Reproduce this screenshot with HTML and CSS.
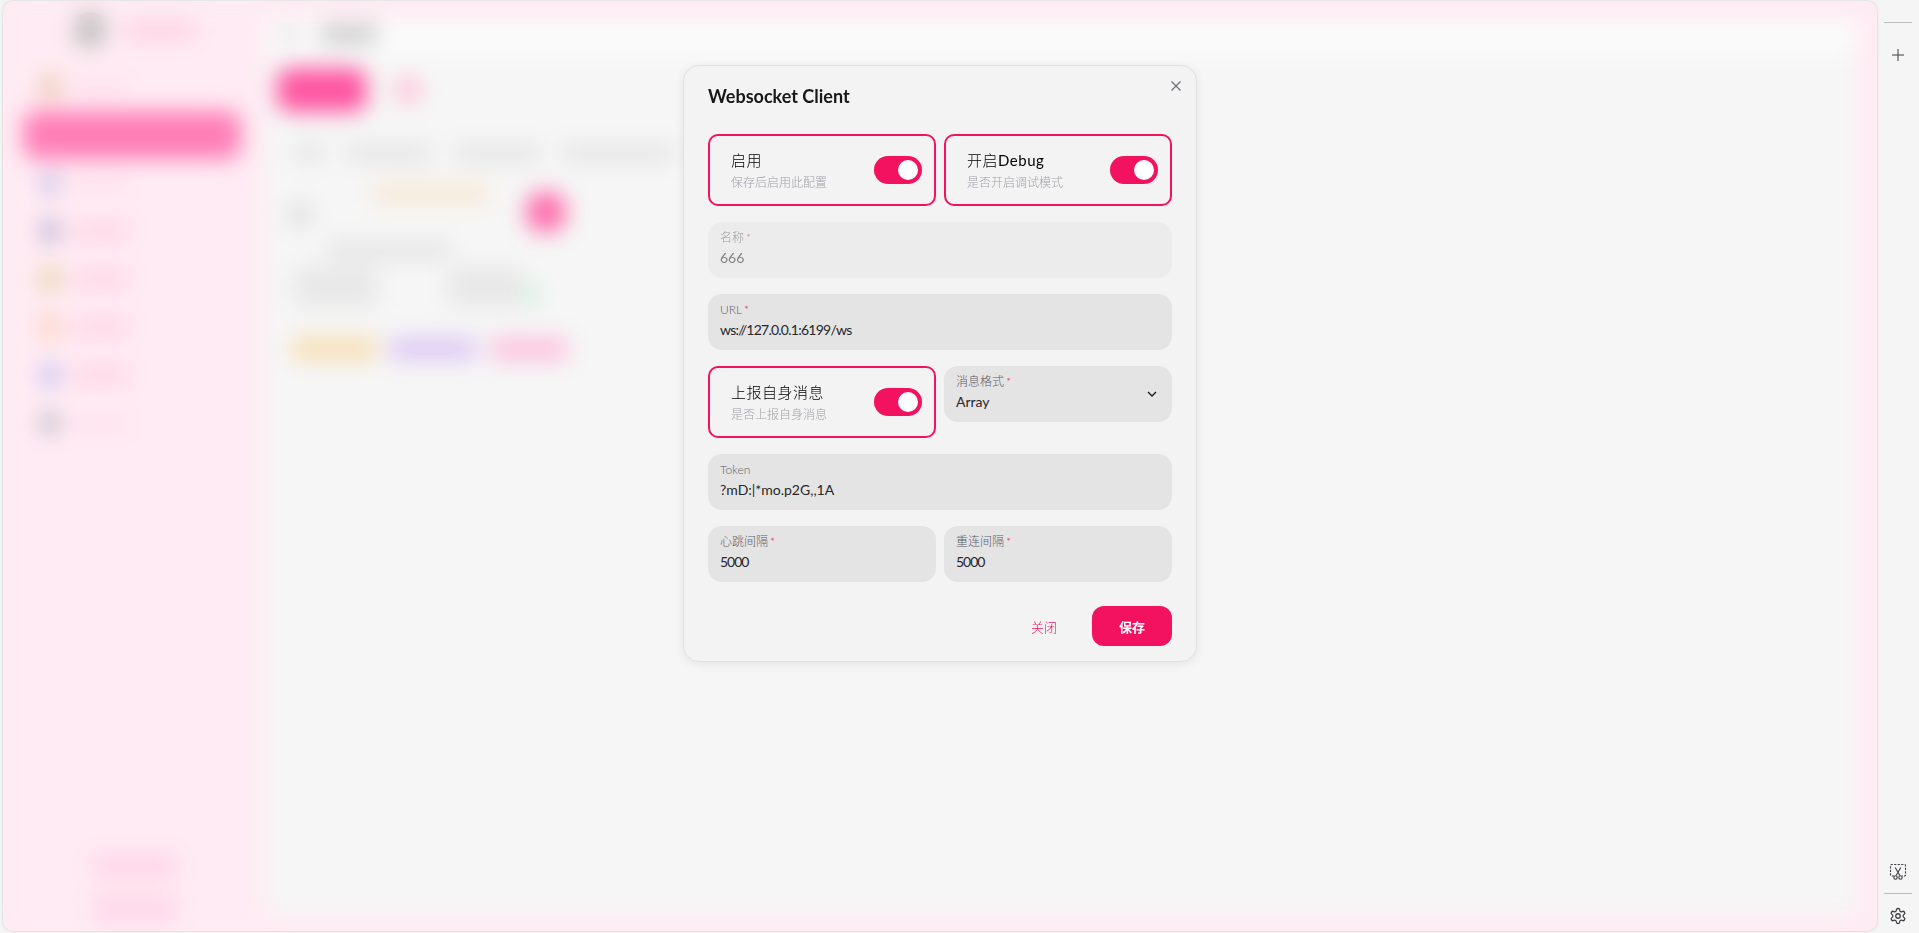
FILE: index.html
```html
<!DOCTYPE html>
<html lang="zh-CN">
<head>
<meta charset="utf-8">
<title>Websocket Client</title>
<link rel="stylesheet" href="styles.css">
</head>
<body>
<div class="shell">
  <div class="panel">
    <aside class="sidebar">
      <div class="logo"><span class="avatar"></span><span class="logo-text"></span></div>
      <nav class="nav">
        <div class="nav-row"><span class="nav-icon i-tan"></span><span class="nav-text faint"></span></div>
        <div class="nav-row active"></div>
        <div class="nav-row"><span class="nav-icon i-blue"></span><span class="nav-text faint"></span></div>
        <div class="nav-row"><span class="nav-icon i-slate"></span><span class="nav-text"></span></div>
        <div class="nav-row"><span class="nav-icon i-olive"></span><span class="nav-text"></span></div>
        <div class="nav-row"><span class="nav-icon i-peach"></span><span class="nav-text"></span></div>
        <div class="nav-row"><span class="nav-icon i-violet"></span><span class="nav-text"></span></div>
        <div class="nav-row"><span class="nav-icon i-gray"></span><span class="nav-text faint"></span></div>
      </nav>
      <div class="side-foot"><span class="foot-btn"></span><span class="foot-btn"></span></div>
    </aside>
    <main class="main">
      <header class="topbar"><span class="back"></span><span class="page-title"></span></header>
      <div class="content">
        <div class="actions"><span class="new-btn"></span><span class="icon-btn"></span></div>
        <div class="tabs"><span class="tab t1"></span><span class="tab t2"></span><span class="tab t2"></span><span class="tab t3"></span></div>
        <section class="card">
          <div class="card-head">
            <span class="card-dot"></span>
            <span class="card-tag"></span>
            <span class="card-switch"></span>
          </div>
          <span class="line-a"></span>
          <div class="card-lines"><span class="line-b"></span><span class="line-c"></span><span class="line-d"></span></div>
          <div class="card-tags"><span class="chip c-y"></span><span class="chip c-p"></span><span class="chip c-r"></span></div>
        </section>
      </div>
    </main>

    <div class="overlay">
      <div class="modal">
        <svg class="close-x" viewBox="0 0 12 12" width="12" height="12"><path d="M1.5 1.5l9 9M10.500 1.500l-9 9"/></svg>
        <h2 class="modal-title">Websocket Client</h2>
        <div class="form">
          <div class="switch-box">
            <div class="switch-text"><div class="switch-label">启用</div><div class="switch-sub">保存后启用此配置</div></div>
            <span class="toggle"><span class="knob"></span></span>
          </div>
          <div class="switch-box">
            <div class="switch-text"><div class="switch-label">开启<span class="latin">Debug</span></div><div class="switch-sub">是否开启调试模式</div></div>
            <span class="toggle"><span class="knob"></span></span>
          </div>
          <div class="field span disabled">
            <div class="field-label">名称<i>*</i></div>
            <div class="field-value">666</div>
          </div>
          <div class="field span">
            <div class="field-label">URL<i>*</i></div>
            <div class="field-value tight">ws://127.0.0.1:6199/ws</div>
          </div>
          <div class="switch-box">
            <div class="switch-text"><div class="switch-label">上报自身消息</div><div class="switch-sub">是否上报自身消息</div></div>
            <span class="toggle"><span class="knob"></span></span>
          </div>
          <div class="field select">
            <div class="field-label">消息格式<i>*</i></div>
            <div class="field-value">Array</div>
            <svg class="chevron" viewBox="0 0 12 12" width="12" height="12"><path d="M2 4l4 4 4-4"/></svg>
          </div>
          <div class="field span">
            <div class="field-label">Token</div>
            <div class="field-value">?mD:|*mo.p2G,,1A</div>
          </div>
          <div class="field">
            <div class="field-label">心跳间隔<i>*</i></div>
            <div class="field-value tighter">5000</div>
          </div>
          <div class="field">
            <div class="field-label">重连间隔<i>*</i></div>
            <div class="field-value tighter">5000</div>
          </div>
        </div>
        <div class="modal-foot">
          <button class="btn btn-ghost" type="button">关闭</button>
          <button class="btn btn-solid" type="button">保存</button>
        </div>
      </div>
    </div>
  </div>

  <aside class="rail">
    <div class="rail-line"></div>
    <svg class="rail-icon plus" viewBox="0 0 14 14" width="14" height="14"><path d="M7 1v12M1 7h12"/></svg>
    <div class="rail-spacer"></div>
    <svg class="rail-icon capture" viewBox="0 0 18 18" width="18" height="18">
      <path class="dash" d="M5 13H2.500a1 1 0 0 1-1-1V2.500a1 1 0 0 1 1-1h13a1 1 0 0 1 1 1V12a1 1 0 0 1-1 1H13"/>
      <path d="M6.200 4.500l4.600 8M11.800 4.500l-4.600 8"/>
      <circle cx="6.500" cy="14.500" r="1.700"/><circle cx="11.500" cy="14.500" r="1.700"/>
    </svg>
    <div class="rail-line second"></div>
    <svg class="rail-icon gear" viewBox="0 0 24 24" width="18" height="18">
      <path d="M12.220 2h-.44a2 2 0 0 0-2 2v.18a2 2 0 0 1-1 1.730l-.43.25a2 2 0 0 1-2 0l-.15-.08a2 2 0 0 0-2.730.73l-.22.38a2 2 0 0 0 .73 2.730l.15.1a2 2 0 0 1 1 1.720v.51a2 2 0 0 1-1 1.740l-.15.09a2 2 0 0 0-.73 2.730l.22.38a2 2 0 0 0 2.730.73l.15-.08a2 2 0 0 1 2 0l.43.25a2 2 0 0 1 1 1.730V20a2 2 0 0 0 2 2h.44a2 2 0 0 0 2-2v-.18a2 2 0 0 1 1-1.730l.43-.25a2 2 0 0 1 2 0l.15.08a2 2 0 0 0 2.730-.73l.22-.39a2 2 0 0 0-.73-2.730l-.15-.08a2 2 0 0 1-1-1.740v-.5a2 2 0 0 1 1-1.740l.15-.09a2 2 0 0 0 .73-2.730l-.22-.38a2 2 0 0 0-2.730-.73l-.15.08a2 2 0 0 1-2 0l-.43-.25a2 2 0 0 1-1-1.730V4a2 2 0 0 0-2-2z"/>
      <circle cx="12" cy="12" r="3"/>
    </svg>
  </aside>
</div>
</body>
</html>
```

FILE: styles.css
```css
* { box-sizing: border-box; }
html, body { height: 100%; margin: 0; }
body {
  background: #f5f5f5;
  color: #18181b;
  font-family: "Lato", "Noto Sans CJK SC", sans-serif;
  overflow: hidden;
}
.shell { display: flex; height: 100vh; padding: 1px 0 2px 3px; }

/* background application, blurred by the overlay */
.panel {
  position: relative;
  flex: 1;
  display: flex;
  min-width: 0;
  background: #ffebf3;
  border-radius: 10px;
  box-shadow: 0 0 3px rgba(0, 0, 0, .18);
  overflow: hidden;
}
.sidebar {
  width: 262px;
  flex: none;
  display: flex;
  flex-direction: column;
  padding: 9px 0 11px 23px;
}
.logo { display: flex; align-items: center; gap: 20px; height: 40px; padding-left: 48px; }
.avatar { width: 32px; height: 36px; border-radius: 16px; background: #c2c2c2; }
.logo-text { width: 68px; height: 16px; background: #ffcde2; }
.nav { margin-top: 13px; display: flex; flex-direction: column; }
.nav-row { height: 48px; display: flex; align-items: center; gap: 14px; padding-left: 15px; }
.nav-icon { width: 18px; height: 22px; border-radius: 8px; }
.nav-text { width: 56px; height: 14px; background: #ffcfe3; }
.nav-text.faint { background: #ffe0ec; }
.i-tan { background: #e6c3a4; }
.i-blue { background: #c8c0e8; }
.i-slate { background: #b4aed2; }
.i-olive { background: #dfd29c; }
.i-peach { background: #fccdb4; }
.i-violet { background: #bfbdf3; }
.i-gray { background: #b9bac8; }
.nav-row.active { width: 218px; margin-left: -3px; border-radius: 14px; background: #ff7db6; }
.side-foot { margin-top: auto; display: flex; flex-direction: column; gap: 18px; padding-left: 67px; }
.foot-btn { width: 84px; height: 24px; background: #ffd6e8; }

.main {
  flex: 1;
  min-width: 0;
  margin: 18px 20px 16px 0;
  background: #f6f6f6;
  border-radius: 12px;
  display: flex;
  flex-direction: column;
}
.topbar {
  height: 36px;
  display: flex;
  align-items: flex-start;
  gap: 22px;
  padding: 5px 0 0 14px;
  background: #fbfbfb;
}
.back { width: 20px; height: 14px; margin-top: 4px; background: #e2e2e2; }
.page-title { width: 56px; height: 20px; background: #cecece; }
.content { padding: 13px 0 0 12px; }
.actions { display: flex; align-items: center; gap: 28px; }
.new-btn { width: 90px; height: 44px; border-radius: 14px; background: #ff55a2; }
.icon-btn { width: 26px; height: 26px; border-radius: 13px; background: #ffbfd7; }
.tabs { display: flex; align-items: center; gap: 24px; margin: 31px 0 0 18px; }
.tab { height: 20px; background: #e6e6e6; }
.t1 { width: 28px; }
.t2 { width: 84px; }
.t3 { width: 110px; }
.card { width: 292px; margin: 13px 0 0 10px; }
.card-head { display: flex; align-items: flex-start; height: 60px; }
.card-dot { width: 26px; height: 26px; border-radius: 13px; background: #e0e0e0; margin-top: 26px; flex: none; }
.card-tag { width: 116px; height: 20px; background: #f7e9d6; margin: 8px 0 0 60px; flex: none; }
.card-switch { width: 42px; height: 42px; border-radius: 21px; background: #ff6fae; margin: 15px 0 0 36px; flex: none; }
.line-a { display: block; width: 124px; height: 20px; margin: 4px 0 0 40px; background: #e6e6e6; }
.card-lines { display: flex; margin: 7px 0 0 7px; height: 40px; }
.line-b { width: 84px; height: 40px; background: #e8e8e8; flex: none; }
.line-c { width: 74px; height: 40px; margin-left: 70px; background: #e8e8e8; flex: none; }
.line-d { width: 20px; height: 28px; margin-top: 13px; background: #dff3e6; flex: none; }
.card-tags { display: flex; gap: 13px; margin: 30px 0 0 5px; }
.chip { height: 24px; flex: none; }
.c-y { width: 85px; background: #f8e0b8; }
.c-p { width: 86px; background: #dfcbf5; }
.c-r { width: 76px; background: #fdc4e0; margin-left: 2px; }

/* overlay + modal */
.overlay {
  position: absolute;
  inset: 0;
  display: flex;
  justify-content: center;
  align-items: flex-start;
  padding-top: 64px;
  backdrop-filter: blur(11px);
}
.modal {
  position: relative;
  width: 514px;
  height: 597px;
  padding: 16px 24px;
  background: #f3f3f3;
  border: 1px solid #e0e0e0;
  border-radius: 16px;
  box-shadow: 0 2px 10px rgba(0, 0, 0, .08);
}
.close-x { position: absolute; top: 14px; right: 14px; fill: none; stroke: #71717a; stroke-width: 1.300; }
.modal-title { margin: 0 0 24px; font-size: 18px; line-height: 28px; font-weight: 700; color: #18181b; }
.form { display: grid; grid-template-columns: 1fr 1fr; gap: 16px 8px; align-items: start; }
.span { grid-column: span 2; }
.switch-box {
  display: flex;
  align-items: center;
  justify-content: space-between;
  height: 72px;
  padding: 0 12px 0 21px;
  border: 2px solid #f31260;
  border-radius: 10px;
}
.switch-label { font-size: 15px; line-height: 22px; font-weight: 300; color: #000; letter-spacing: .5px; }
.latin { font-weight: 400; }
.switch-sub { font-size: 12px; line-height: 16px; margin-top: 4px; color: #a1a1aa; font-weight: 300; }
.toggle { display: flex; justify-content: flex-end; align-items: center; width: 48px; height: 28px; padding: 0 4px; border-radius: 14px; background: #f31260; }
.knob { width: 20px; height: 20px; border-radius: 10px; background: #fff; }
.field {
  position: relative;
  height: 56px;
  padding: 7px 12px;
  background: #e4e4e5;
  border-radius: 14px;
}
.field-label { font-size: 12px; line-height: 18px; color: #5c5c66; font-weight: 300; }
.field-label i { font-style: normal; color: #f31260; margin-left: 2px; }
.field-value { font-size: 14px; line-height: 22px; color: #27272a; }
.tight { letter-spacing: -.75px; }
.tighter { letter-spacing: -1px; }
.disabled { background: #ececec; }
.disabled .field-label, .disabled .field-value { opacity: .55; }
.chevron { position: absolute; top: 22px; right: 14px; fill: none; stroke: #18181b; stroke-width: 1.300; }
.modal-foot { display: flex; justify-content: flex-end; gap: 8px; margin-top: 24px; }
.btn { width: 80px; height: 40px; border: 0; border-radius: 12px; font-family: inherit; font-size: 13px; background: none; padding: 0; }
.btn-ghost { color: #f31260; font-weight: 300; }
.btn-solid { background: #f31260; color: #fff; font-weight: 700; }

/* right rail */
.rail { width: 42px; flex: none; display: flex; flex-direction: column; align-items: center; padding: 21px 0 6px; }
.rail-line { width: 28px; height: 1px; background: #bdbdbd; flex: none; }
.rail-line.second { margin: 12px 0 13px; }
.rail-icon { flex: none; fill: none; stroke: #3f3f46; }
.capture { stroke-width: 1.100; }
.capture .dash { stroke-dasharray: 2.200 1.300; }
.gear { stroke-width: 1.700; }
.plus { margin-top: 25px; stroke-width: 1; }
.rail-spacer { flex: 1; }
```
